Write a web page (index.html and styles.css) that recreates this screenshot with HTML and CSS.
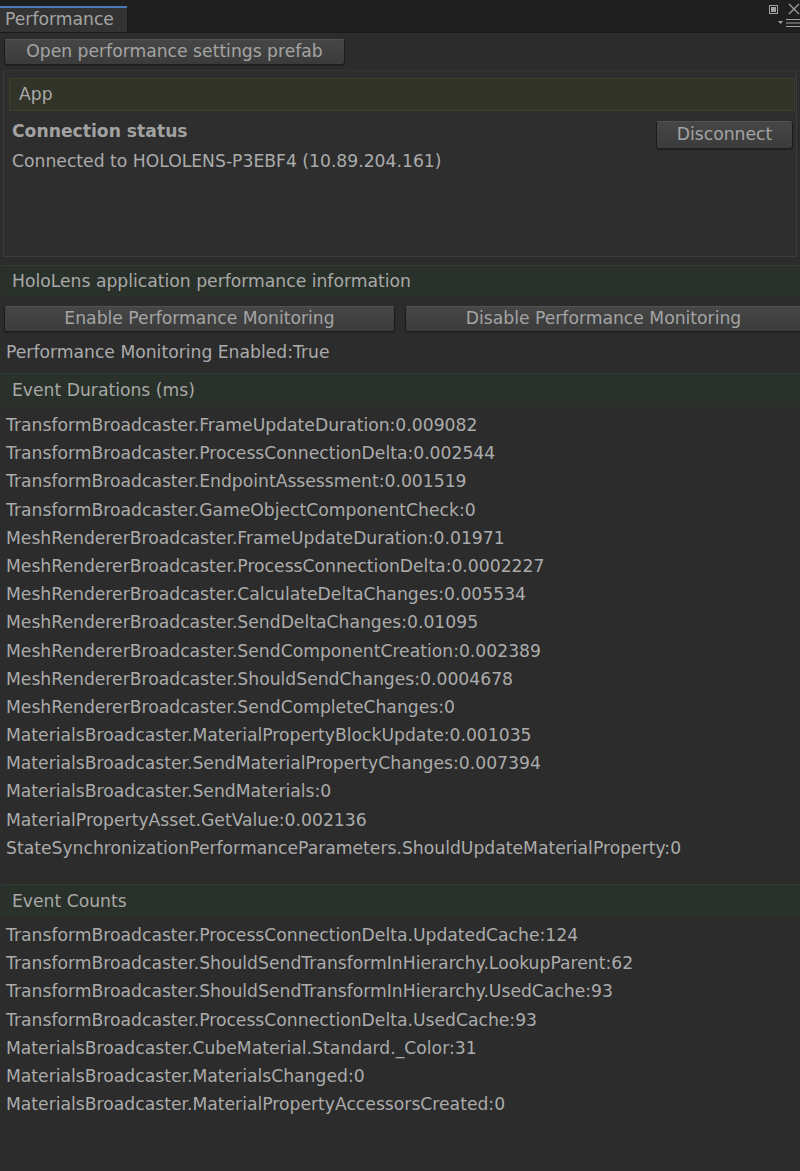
FILE: index.html
```html
<!DOCTYPE html>
<html>
<head>
<meta charset="utf-8">
<link rel="stylesheet" href="styles.css">
</head>
<body>
<div class="window">
  <div class="tabbar">
    <div class="tab">Performance</div>
    <div class="winctl">
      <div class="ctl-top">
        <svg class="ico-max" width="9" height="9" viewBox="0 0 9 9"><rect x="0.5" y="0.5" width="8" height="8" fill="none" stroke="#a0a0a0"/><rect x="2" y="2" width="5" height="5" fill="#a0a0a0"/></svg>
        <svg class="ico-close" width="12" height="12" viewBox="0 0 12 12"><path d="M1 1L11 11M11 1L1 11" stroke="#a0a0a0" stroke-width="1.3"/></svg>
      </div>
      <svg class="ico-menu" width="22" height="10" viewBox="0 0 22 10"><path d="M0 3h5l-2.5 3z" fill="#a0a0a0"/><path d="M8 1.5h14M8 5h14M8 8.5h14" stroke="#a0a0a0" stroke-width="1.2"/></svg>
    </div>
  </div>
  <div class="content">
    <div class="btn btn-prefab">Open performance settings prefab</div>
    <div class="box">
      <div class="box-header">App</div>
      <div class="status-row">
        <div class="bold">Connection status</div>
        <div class="btn btn-disconnect">Disconnect</div>
      </div>
      <div class="status-line">Connected to HOLOLENS-P3EBF4 (10.89.204.161)</div>
    </div>
    <div class="gheader gh-info">HoloLens application performance information</div>
    <div class="btn-row">
      <div class="btn">Enable Performance Monitoring</div>
      <div class="btn">Disable Performance Monitoring</div>
    </div>
    <div class="enabled">Performance Monitoring Enabled:True</div>
    <div class="gheader gh-dur">Event Durations (ms)</div>
    <div class="list">
      <div>TransformBroadcaster.FrameUpdateDuration:0.009082</div>
      <div>TransformBroadcaster.ProcessConnectionDelta:0.002544</div>
      <div>TransformBroadcaster.EndpointAssessment:0.001519</div>
      <div>TransformBroadcaster.GameObjectComponentCheck:0</div>
      <div>MeshRendererBroadcaster.FrameUpdateDuration:0.01971</div>
      <div>MeshRendererBroadcaster.ProcessConnectionDelta:0.0002227</div>
      <div>MeshRendererBroadcaster.CalculateDeltaChanges:0.005534</div>
      <div>MeshRendererBroadcaster.SendDeltaChanges:0.01095</div>
      <div>MeshRendererBroadcaster.SendComponentCreation:0.002389</div>
      <div>MeshRendererBroadcaster.ShouldSendChanges:0.0004678</div>
      <div>MeshRendererBroadcaster.SendCompleteChanges:0</div>
      <div>MaterialsBroadcaster.MaterialPropertyBlockUpdate:0.001035</div>
      <div>MaterialsBroadcaster.SendMaterialPropertyChanges:0.007394</div>
      <div>MaterialsBroadcaster.SendMaterials:0</div>
      <div>MaterialPropertyAsset.GetValue:0.002136</div>
      <div>StateSynchronizationPerformanceParameters.ShouldUpdateMaterialProperty:0</div>
    </div>
    <div class="gheader gh-count">Event Counts</div>
    <div class="list">
      <div>TransformBroadcaster.ProcessConnectionDelta.UpdatedCache:124</div>
      <div>TransformBroadcaster.ShouldSendTransformInHierarchy.LookupParent:62</div>
      <div>TransformBroadcaster.ShouldSendTransformInHierarchy.UsedCache:93</div>
      <div>TransformBroadcaster.ProcessConnectionDelta.UsedCache:93</div>
      <div>MaterialsBroadcaster.CubeMaterial.Standard._Color:31</div>
      <div>MaterialsBroadcaster.MaterialsChanged:0</div>
      <div>MaterialsBroadcaster.MaterialPropertyAccessorsCreated:0</div>
    </div>
  </div>
</div>
</body>
</html>
```

FILE: styles.css
```css
html, body {
  margin: 0;
  padding: 0;
  background: #2c2c2c;
}
body {
  font-family: "DejaVu Sans", Verdana, sans-serif;
  font-size: 17.2px;
  color: #ababab;
  width: 800px;
  height: 1171px;
  overflow: hidden;
}
.window {
  display: flex;
  flex-direction: column;
  height: 1171px;
}
.tabbar {
  height: 33px;
  background: #1f1f1f;
  display: flex;
  justify-content: space-between;
  align-items: flex-end;
  border-bottom: 1px solid #1a1a1a;
  box-sizing: border-box;
}
.tab {
  width: 128px;
  height: 26px;
  box-sizing: border-box;
  background: #333333;
  border-top: 2px solid #4a7ab8;
  border-right: 1px solid #1a1a1a;
  border-top-right-radius: 2px;
  padding-left: 5px;
  line-height: 23px;
  color: #a4a4a4;
}
.winctl {
  display: flex;
  flex-direction: column;
  align-items: flex-end;
  align-self: stretch;
  padding-top: 3px;
  gap: 3px;
}
.ctl-top {
  display: flex;
  align-items: center;
  gap: 10px;
}
.content {
  flex: 1;
  display: flex;
  flex-direction: column;
}
.btn {
  box-sizing: border-box;
  height: 26px;
  background: linear-gradient(#464646, #3b3b3b);
  border: 1px solid #1c1c1c;
  border-top-color: #525252;
  border-radius: 3px;
  box-shadow: 0 1px 1px #222;
  text-align: center;
  line-height: 22px;
  color: #a4a4a4;
}
.btn-prefab {
  width: 341px;
  margin: 6px 0 0 4px;
}
.box {
  margin: 5px 3px 0 3px;
  height: 187px;
  box-sizing: border-box;
  border: 1px solid #3b3b3b;
  border-top-color: #353535;
  background: #2e2e2e;
  padding: 7px 1px 0 5px;
}
.box-header {
  height: 33px;
  box-sizing: border-box;
  background: #333429;
  border: 1px solid #3e3f2b;
  padding-left: 9px;
  line-height: 31px;
  color: #aaaaaa;
}
.status-row {
  display: flex;
  justify-content: space-between;
  align-items: flex-start;
  margin-top: 10px;
  padding-left: 3px;
}
.bold {
  font-weight: bold;
  color: #a2a2a2;
  line-height: 20px;
}
.btn-disconnect {
  width: 137px;
  height: 28px;
  line-height: 24px;
  margin-right: 2px;
}
.status-line {
  padding-left: 3px;
  margin-top: 1px;
  line-height: 22px;
}
.gheader {
  box-sizing: border-box;
  background: #29312a;
  border-top: 1px solid #2f3a30;
  margin-left: 1px;
  padding-left: 11px;
  color: #a8a8a8;
}
.gh-info {
  margin-top: 8px;
  height: 32px;
  line-height: 31px;
}
.btn-row {
  display: grid;
  grid-template-columns: 391px 397px;
  gap: 10px;
  margin: 9px 0 0 4px;
}
.enabled {
  padding-left: 6px;
  margin-top: 8px;
  line-height: 24px;
}
.gh-dur {
  margin-top: 9px;
  height: 34px;
  line-height: 32px;
}
.list {
  margin-top: 4px;
  padding-left: 6px;
  white-space: nowrap;
}
.list div {
  height: 28.2px;
  line-height: 28.2px;
}
.gh-count {
  margin-top: 22px;
  height: 33px;
  line-height: 32px;
}
```
